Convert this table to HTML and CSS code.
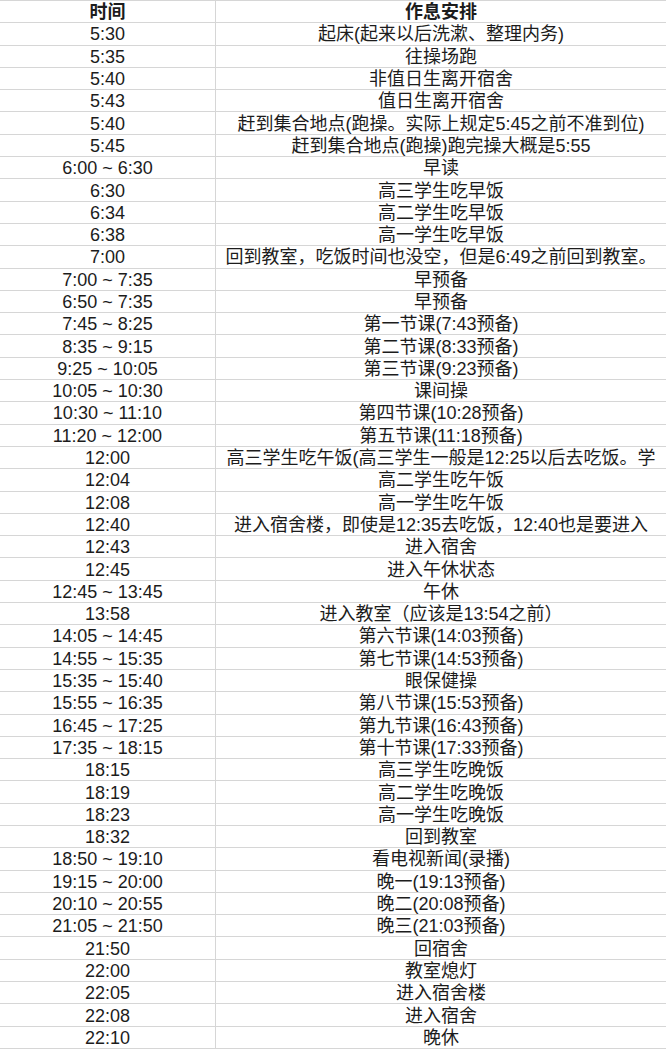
FILE: index.html
```html
<!DOCTYPE html>
<html lang="zh-CN">
<head>
<meta charset="utf-8">
<title>作息安排</title>
<link rel="stylesheet" href="styles.css">
</head>
<body>
<div class="table">
  <div class="cell time head">时间</div><div class="cell desc head">作息安排</div>
  <div class="cell time">5:30</div><div class="cell desc">起床(起来以后洗漱、整理内务)</div>
  <div class="cell time">5:35</div><div class="cell desc">往操场跑</div>
  <div class="cell time">5:40</div><div class="cell desc">非值日生离开宿舍</div>
  <div class="cell time">5:43</div><div class="cell desc">值日生离开宿舍</div>
  <div class="cell time">5:40</div><div class="cell desc">赶到集合地点(跑操。实际上规定5:45之前不准到位)</div>
  <div class="cell time">5:45</div><div class="cell desc">赶到集合地点(跑操)跑完操大概是5:55</div>
  <div class="cell time">6:00 ~ 6:30</div><div class="cell desc">早读</div>
  <div class="cell time">6:30</div><div class="cell desc">高三学生吃早饭</div>
  <div class="cell time">6:34</div><div class="cell desc">高二学生吃早饭</div>
  <div class="cell time">6:38</div><div class="cell desc">高一学生吃早饭</div>
  <div class="cell time">7:00</div><div class="cell desc">回到教室，吃饭时间也没空，但是6:49之前回到教室。</div>
  <div class="cell time">7:00 ~ 7:35</div><div class="cell desc">早预备</div>
  <div class="cell time">6:50 ~ 7:35</div><div class="cell desc">早预备</div>
  <div class="cell time">7:45 ~ 8:25</div><div class="cell desc">第一节课(7:43预备)</div>
  <div class="cell time">8:35 ~ 9:15</div><div class="cell desc">第二节课(8:33预备)</div>
  <div class="cell time">9:25 ~ 10:05</div><div class="cell desc">第三节课(9:23预备)</div>
  <div class="cell time">10:05 ~ 10:30</div><div class="cell desc">课间操</div>
  <div class="cell time">10:30 ~ 11:10</div><div class="cell desc">第四节课(10:28预备)</div>
  <div class="cell time">11:20 ~ 12:00</div><div class="cell desc">第五节课(11:18预备)</div>
  <div class="cell time">12:00</div><div class="cell desc">高三学生吃午饭(高三学生一般是12:25以后去吃饭。学</div>
  <div class="cell time">12:04</div><div class="cell desc">高二学生吃午饭</div>
  <div class="cell time">12:08</div><div class="cell desc">高一学生吃午饭</div>
  <div class="cell time">12:40</div><div class="cell desc">进入宿舍楼，即使是12:35去吃饭，12:40也是要进入</div>
  <div class="cell time">12:43</div><div class="cell desc">进入宿舍</div>
  <div class="cell time">12:45</div><div class="cell desc">进入午休状态</div>
  <div class="cell time">12:45 ~ 13:45</div><div class="cell desc">午休</div>
  <div class="cell time">13:58</div><div class="cell desc">进入教室（应该是13:54之前）</div>
  <div class="cell time">14:05 ~ 14:45</div><div class="cell desc">第六节课(14:03预备)</div>
  <div class="cell time">14:55 ~ 15:35</div><div class="cell desc">第七节课(14:53预备)</div>
  <div class="cell time">15:35 ~ 15:40</div><div class="cell desc">眼保健操</div>
  <div class="cell time">15:55 ~ 16:35</div><div class="cell desc">第八节课(15:53预备)</div>
  <div class="cell time">16:45 ~ 17:25</div><div class="cell desc">第九节课(16:43预备)</div>
  <div class="cell time">17:35 ~ 18:15</div><div class="cell desc">第十节课(17:33预备)</div>
  <div class="cell time">18:15</div><div class="cell desc">高三学生吃晚饭</div>
  <div class="cell time">18:19</div><div class="cell desc">高二学生吃晚饭</div>
  <div class="cell time">18:23</div><div class="cell desc">高一学生吃晚饭</div>
  <div class="cell time">18:32</div><div class="cell desc">回到教室</div>
  <div class="cell time">18:50 ~ 19:10</div><div class="cell desc">看电视新闻(录播)</div>
  <div class="cell time">19:15 ~ 20:00</div><div class="cell desc">晚一(19:13预备)</div>
  <div class="cell time">20:10 ~ 20:55</div><div class="cell desc">晚二(20:08预备)</div>
  <div class="cell time">21:05 ~ 21:50</div><div class="cell desc">晚三(21:03预备)</div>
  <div class="cell time">21:50</div><div class="cell desc">回宿舍</div>
  <div class="cell time">22:00</div><div class="cell desc">教室熄灯</div>
  <div class="cell time">22:05</div><div class="cell desc">进入宿舍楼</div>
  <div class="cell time">22:08</div><div class="cell desc">进入宿舍</div>
  <div class="cell time">22:10</div><div class="cell desc">晚休</div>
</div>
</body>
</html>
```
FILE: styles.css
```css
html, body {
  margin: 0;
  padding: 0;
  background: #ffffff;
}

.table {
  display: grid;
  grid-template-columns: 216px 450px;
  grid-auto-rows: 22.31px;
  width: 666px;
  font-family: "Liberation Sans", "Noto Sans CJK SC", sans-serif;
  font-size: 18px;
  color: #1c1c1c;
  border-top: 1px solid #d6d6d6;
  box-sizing: border-box;
}

.cell {
  display: flex;
  align-items: center;
  justify-content: center;
  white-space: nowrap;
  border-bottom: 1px solid #d6d6d6;
  box-sizing: border-box;
  line-height: 20px;
  padding-top: 1px;
}

.time {
  border-right: 1px solid #d6d6d6;
}

.head {
  font-weight: 700;
}
```
